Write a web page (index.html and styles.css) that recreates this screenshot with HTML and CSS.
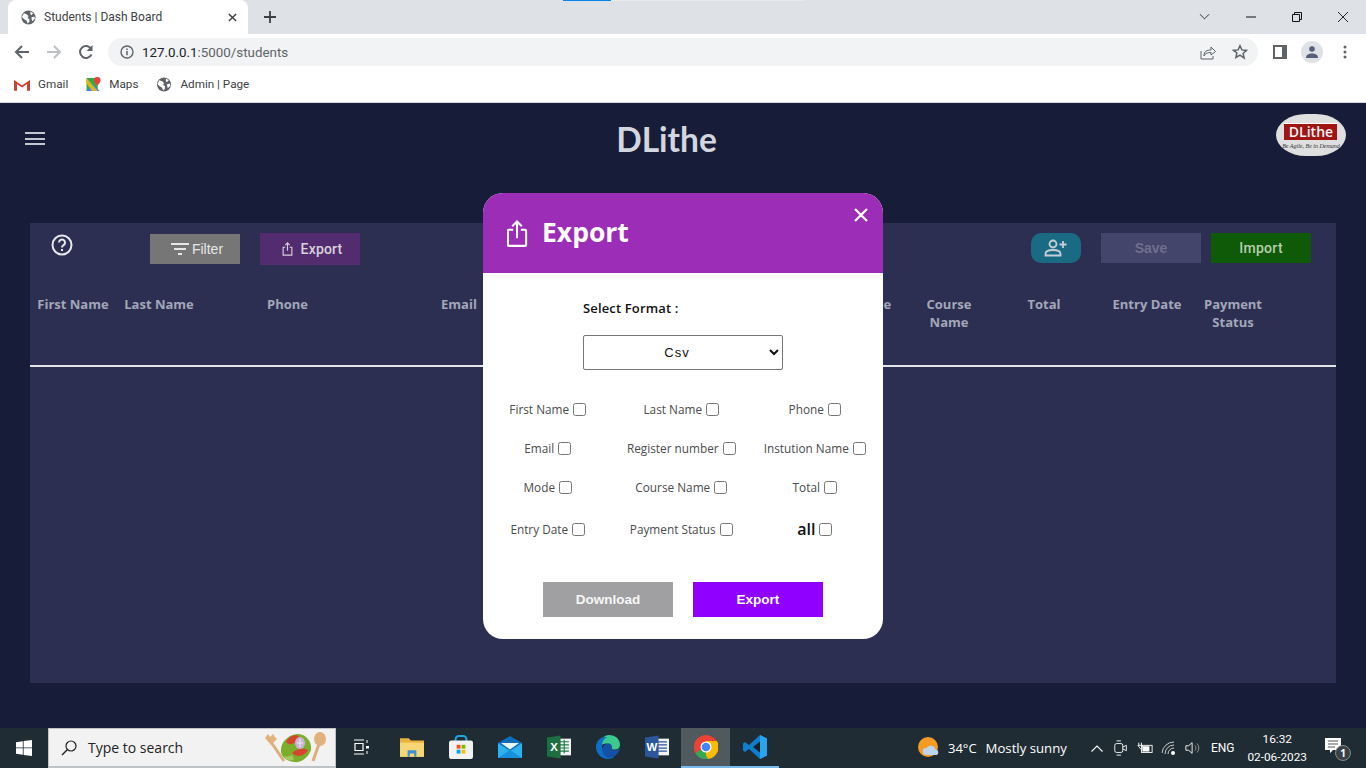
FILE: index.html
```html
<!DOCTYPE html>
<html lang="en">
<head>
<meta charset="UTF-8" />
<title>Students | Dash Board</title>
<link rel="stylesheet" href="styles.css">
</head>
<body>
<div class="browser">
  <div class="tabstrip">
    <div class="tab">
      <svg class="globe" viewBox="0 0 16 16"><circle cx="8" cy="8" r="7.5" fill="#5f6368"/><path d="M3 3.5l3 1 2 2-1 2 2 1v3l-2 2-1-3-3-2-2-2zM10 1.5l3 2-2 2-1-1zM11 8l3-1 1 2-3 3z" fill="#fff"/></svg>
      <span class="tab-title">Students | Dash Board</span>
      <svg class="tab-x" viewBox="0 0 10 10"><path d="M1 1l8 8M9 1l-8 8" stroke="#3c4043" stroke-width="1.6"/></svg>
    </div>
    <svg class="new-tab" viewBox="0 0 12 12"><path d="M6 0v12M0 6h12" stroke="#3c4043" stroke-width="1.8"/></svg>
    <div class="win-btns">
      <svg viewBox="0 0 12 8" class="wb-chev"><path d="M1 1l5 5 5-5" fill="none" stroke="#222" stroke-width="1"/></svg>
      <svg viewBox="0 0 10 10" class="wb-min"><path d="M0 5h10" stroke="#111" stroke-width="1"/></svg>
      <svg viewBox="0 0 10 10" class="wb-max"><path d="M.5 2.5h7v7h-7zM2.5 2.5v-2h7v7h-2" fill="none" stroke="#111" stroke-width="1"/></svg>
      <svg viewBox="0 0 10 10" class="wb-close"><path d="M0 0l10 10M10 0L0 10" stroke="#111" stroke-width=".9"/></svg>
    </div>
    <span class="load-line"></span>
  </div>
  <div class="toolbar">
    <svg class="nav-ic" viewBox="0 0 16 16"><path d="M15 8H2M8 2L2 8l6 6" fill="none" stroke="#5f6368" stroke-width="2"/></svg>
    <svg class="nav-ic" viewBox="0 0 16 16"><path d="M1 8h13M8 2l6 6-6 6" fill="none" stroke="#bdc1c6" stroke-width="2"/></svg>
    <svg class="nav-ic" viewBox="0 0 16 16"><path d="M13.5 10.5A6 6 0 1 1 13 4.5" fill="none" stroke="#5f6368" stroke-width="2"/><path d="M14.5 1v6h-6z" fill="#5f6368"/></svg>
    <div class="omnibox">
      <svg class="info" viewBox="0 0 14 14"><circle cx="7" cy="7" r="6" fill="none" stroke="#5f6368" stroke-width="1.4"/><path d="M7 6v4.2M7 3.6v1.4" stroke="#5f6368" stroke-width="1.5"/></svg>
      <span class="url"><b>127.0.0.1</b>:5000/students</span>
      <svg class="share" viewBox="0 0 16 16"><path d="M1 7v8h12v-3" fill="none" stroke="#5f6368" stroke-width="1"/><path d="M4 12c0-5 3-6 7-6V3l4.500 4.500L11 11V8.500c-3 0-5.500.5-7 3.500z" fill="none" stroke="#5f6368" stroke-width="1"/></svg>
      <svg class="star" viewBox="0 0 16 16"><path d="M8 1.700l1.900 4.200 4.600.5-3.400 3.100 1 4.500L8 11.200 3.900 13.500l1-4.500L1.500 6.400l4.600-.5z" fill="none" stroke="#5f6368" stroke-width="1.500"/></svg>
    </div>
    <svg class="panel-ic" viewBox="0 0 14 14"><path d="M0 0h14v14H0z" fill="#5f6368"/><path d="M2 2h7v10H2z" fill="#fff"/></svg>
    <div class="avatar"><svg viewBox="0 0 14 14"><circle cx="7" cy="4" r="2.800" fill="#555f7a"/><path d="M1 13c0-3.500 3-4.500 6-4.500s6 1 6 4.500z" fill="#555f7a"/></svg></div>
    <svg class="menu-dots" viewBox="0 0 4 14"><circle cx="2" cy="2" r="1.500" fill="#5f6368"/><circle cx="2" cy="7" r="1.500" fill="#5f6368"/><circle cx="2" cy="12" r="1.500" fill="#5f6368"/></svg>
  </div>
  <div class="bookmarks">
    <div class="bm">
      <svg class="bm-ic" viewBox="0 0 16 12"><path d="M0 12V1.500L8 7l8-5.500V12h-3V5.500L8 9 3 5.500V12z" fill="#d93025"/><path d="M3 12V5.500L0 3v9zM13 12V5.500L16 3v9z" fill="#c5453c"/></svg>
      <span>Gmail</span>
    </div>
    <div class="bm">
      <svg class="bm-ic maps" viewBox="0 0 16 16"><path d="M0 1h12v14H0z" fill="#34a853"/><path d="M0 15l7-7 7 7z" fill="#4285f4"/><path d="M0 1l12 14H6L0 7z" fill="#fbbc04" opacity=".85"/><path d="M11.500 0a3.500 3.500 0 0 1 3.500 3.500c0 2.500-3.500 5.500-3.500 5.500S8 6 8 3.500A3.500 3.500 0 0 1 11.500 0z" fill="#ea4335"/></svg>
      <span>Maps</span>
    </div>
    <div class="bm">
      <svg class="bm-ic" viewBox="0 0 16 16"><circle cx="8" cy="8" r="7.500" fill="#5f6368"/><path d="M3 3.500l3 1 2 2-1 2 2 1v3l-2 2-1-3-3-2-2-2zM10 1.500l3 2-2 2-1-1zM11 8l3-1 1 2-3 3z" fill="#fff"/></svg>
      <span>Admin | Page</span>
    </div>
  </div>
</div>

<div class="app">
  <header class="topbar">
    <div class="burger"><i></i><i></i><i></i></div>
    <h1 class="brand">DLithe</h1>
    <div class="logo">
      <span class="logo-box">DLithe</span>
      <span class="logo-tag">Be Agile, Be in Demand</span>
    </div>
  </header>

  <section class="panel">
    <div class="actions">
      <svg class="help" viewBox="0 0 22 22"><circle cx="11" cy="11" r="9.500" fill="none" stroke="#e8e8ee" stroke-width="2"/><path d="M8 8.500a3 3 0 1 1 4.500 2.600c-1 .6-1.500 1-1.500 2.400" fill="none" stroke="#e8e8ee" stroke-width="2"/><path d="M11 15v2" stroke="#e8e8ee" stroke-width="2"/></svg>
      <button class="btn btn-filter">
        <svg viewBox="0 0 18 12"><path d="M0 1h18M3 6h12M7 11h4" stroke="#e6e6e6" stroke-width="1.800"/></svg>
        Filter
      </button>
      <button class="btn btn-export">
        <svg viewBox="0 0 12 16"><path d="M3.500 6H1v9h10V6H8.500M6 10V1M3.500 3.500L6 1l2.500 2.500" fill="none" stroke="#d6cfdc" stroke-width="1.300"/></svg>
        Export
      </button>
      <span class="spacer"></span>
      <button class="btn btn-add">
        <svg viewBox="0 0 24 18"><circle cx="9" cy="5" r="3.500" fill="none" stroke="#c5d0d6" stroke-width="1.800"/><path d="M1.500 16.500v-1.500c0-2.500 3-4 7.500-4s7.500 1.500 7.500 4v1.500z" fill="none" stroke="#c5d0d6" stroke-width="1.800"/><path d="M19 2v7M15.500 5.500h7" stroke="#c5d0d6" stroke-width="1.800"/></svg>
      </button>
      <button class="btn btn-save">Save</button>
      <button class="btn btn-import">Import</button>
    </div>
    <div class="thead">
      <span>First Name</span>
      <span>Last Name</span>
      <span>Phone</span>
      <span>Email</span>
      <span></span>
      <span></span>
      <span>Mode</span>
      <span>Course Name</span>
      <span>Total</span>
      <span>Entry Date</span>
      <span>Payment Status</span>
    </div>
  </section>

  <div class="modal">
    <div class="modal-head">
      <svg class="head-ic" viewBox="0 0 22 28"><path d="M6.500 10H2a1 1 0 0 0-1 1v15a1 1 0 0 0 1 1h17a1 1 0 0 0 1-1V11a1 1 0 0 0-1-1h-4.500M10.500 19V2M5.500 6.500l5-5 5 5" fill="none" stroke="#fff" stroke-width="2.200"/></svg>
      <h2>Export</h2>
      <svg class="modal-x" viewBox="0 0 14 14"><path d="M1 1l12 12M13 1L1 13" stroke="#fff" stroke-width="2.300"/></svg>
    </div>
    <div class="modal-body">
      <label class="fmt-label">Select Format :</label>
      <select class="fmt-select"><option>Csv</option></select>
      <div class="checks">
        <label class="chk">First Name <input type="checkbox"></label>
        <label class="chk">Last Name <input type="checkbox"></label>
        <label class="chk">Phone <input type="checkbox"></label>
        <label class="chk">Email <input type="checkbox"></label>
        <label class="chk">Register number <input type="checkbox"></label>
        <label class="chk">Instution Name <input type="checkbox"></label>
        <label class="chk">Mode <input type="checkbox"></label>
        <label class="chk">Course Name <input type="checkbox"></label>
        <label class="chk">Total <input type="checkbox"></label>
        <label class="chk">Entry Date <input type="checkbox"></label>
        <label class="chk">Payment Status <input type="checkbox"></label>
        <label class="chk chk-all">all <input type="checkbox"></label>
      </div>
      <div class="modal-btns">
        <button class="mbtn mbtn-dl">Download</button>
        <button class="mbtn mbtn-ex">Export</button>
      </div>
    </div>
  </div>
</div>

<footer class="taskbar">
  <svg class="start" viewBox="0 0 16 16"><path d="M0 2.200L6.800 1.200V7.500H0zM7.600 1.100L16 0V7.500H7.600zM0 8.300H6.800V14.800L0 13.800zM7.600 8.300H16V16L7.600 14.900z" fill="#fff"/></svg>
  <div class="search">
    <svg class="lens" viewBox="0 0 16 16"><circle cx="10" cy="6" r="5" fill="none" stroke="#222" stroke-width="1.200"/><path d="M6.500 9.500L1 15" stroke="#222" stroke-width="1.500"/></svg>
    <span>Type to search</span>
    <svg class="salad" viewBox="0 0 64 32"><path d="M7 10l13 19" stroke="#dcae7c" stroke-width="3"/><path d="M1 6l3-4 2 3 3-3 2 3 2 2-6 6z" fill="#e2b27e"/><path d="M55 12l-6 17" stroke="#dcae7c" stroke-width="3"/><ellipse cx="56" cy="7" rx="6" ry="7" fill="#e2b27e"/><path d="M17 17c1-9 9-15 18-15 8 1 13 8 12 16-3 8-10 13-17 12-8-1-14-6-13-13z" fill="#7cae2e"/><path d="M22 10c3-6 9-8 13-6-3 7-8 11-13 6zM28 21c5-5 13-5 16-3-3 6-11 8-16 3z" fill="#d8452e"/><ellipse cx="36" cy="11" rx="5" ry="6" fill="#c9b4d6"/><path d="M36 7v8M33 11h6" stroke="#f1eaf4"/><path d="M19 24c3 1 6 1 9-1l2 5c-4 1-8 0-11-4z" fill="#a9c85b"/></svg>
  </div>
  <div class="tb-apps">
    <div class="tb-app">
      <svg class="i-task" viewBox="0 0 16 16"><path d="M1 1h10M1 15h10M2 4.500h8v7H2z" fill="none" stroke="#fff" stroke-width="1.200"/><path d="M13 7h3v2.500h-3z" fill="#fff"/><path d="M14 1v3M14 12v3" stroke="#fff"/></svg>
    </div>
    <div class="tb-app">
      <svg viewBox="0 0 22 18"><path d="M0 1h8l2 2h12v15H0z" fill="#e8b33f"/><path d="M0 5h22v13H0z" fill="#f7d774"/><path d="M7 12h8v6h-2v-3H9v3H7z" fill="#3a8fd6"/></svg>
    </div>
    <div class="tb-app">
      <svg viewBox="0 0 22 22"><path d="M6 7V4a3 3 0 0 1 3-3h4a3 3 0 0 1 3 3v3" fill="none" stroke="#23a6e0" stroke-width="1.800"/><rect x="0" y="5" width="22" height="17" rx="2" fill="#f2f2f2"/><path d="M7 9h3.500v3.500H7z" fill="#f25022"/><path d="M11.500 9H15v3.500h-3.500z" fill="#7fba00"/><path d="M7 13.500h3.500V17H7z" fill="#00a4ef"/><path d="M11.500 13.500H15V17h-3.500z" fill="#ffb900"/></svg>
    </div>
    <div class="tb-app">
      <svg viewBox="0 0 24 22"><path d="M0 7L12 0l12 7v15H0z" fill="#0f6cbd"/><path d="M0 7l12 8 12-8v15H0z" fill="#2db2f0"/><path d="M3 7h18l-9 6.500z" fill="#e8f4fc"/><path d="M0 22l12-8 12 8z" fill="#1a8fdb"/></svg>
    </div>
    <div class="tb-app">
      <svg viewBox="0 0 23 22"><path d="M9 3h14v16H9z" fill="#f2f2f2"/><path d="M12 6h9M12 9h9M12 12h9M12 15h9M16.500 4v13" stroke="#1f7a4a" stroke-width="1.100"/><path d="M0 2l13-2v22L0 20z" fill="#1d6f42"/><text x="3" y="15" class="ic-letter">X</text></svg>
    </div>
    <div class="tb-app">
      <svg viewBox="0 0 22 22"><path d="M3 12C2 5 7 0 12 0c6 0 10 4 10 9 0 4-4 5-7 4-1-.5-1-1.500-.5-2.500C12 7 7 7 5 10c-1 2-1.500 3-2 2z" fill="#3bc98d"/><path d="M0 11C0 5 5 1 10 2 6 4 5 8 6 13c1 5 6 8 11 7-2 1.500-4 2-6 2C5 22 0 17 0 11z" fill="#0f6fc6"/><path d="M6 13c0-4 4-6 7-5 2 1 1 3 1.500 4.500 1 2 5 2 7.500-.5-1 5-5 9-10 9-4-1-6-4-6-8z" fill="#1450a3"/></svg>
    </div>
    <div class="tb-app">
      <svg viewBox="0 0 23 22"><path d="M9 3h14v16H9z" fill="#f2f2f2"/><path d="M12 6h9M12 9h9M12 12h9M12 15h9" stroke="#2b579a" stroke-width="1.200"/><path d="M0 2l13-2v22L0 20z" fill="#2b579a"/><text x="1.500" y="15" class="ic-letter">W</text></svg>
    </div>
    <div class="tb-app tb-active">
      <svg viewBox="0 0 24 24"><circle cx="12" cy="12" r="12" fill="#ea4335"/><path d="M12 12L1.600 18A12 12 0 0 0 12 24c1.500 0 2.500-.2 2.500-.2z" fill="#34a853"/><path d="M12 6h10.900A12 12 0 0 1 12 24z" fill="#fbbc04"/><path d="M1.600 18A12 12 0 0 1 2 5.500L8 15z" fill="#ea4335"/><path d="M1.600 18L8 14l6 9.800A12 12 0 0 1 1.600 18z" fill="#34a853"/><circle cx="12" cy="12" r="5.500" fill="#fff"/><circle cx="12" cy="12" r="4.300" fill="#4285f4"/></svg>
    </div>
    <div class="tb-app tb-open">
      <svg viewBox="0 0 24 24"><path d="M17 0l7 3.500v17L17 24 6 14l-4 3-2-1.500v-7L2 7l4 3z" fill="#0f7fcc"/><path d="M17 6.500L10 12l7 5.500z" fill="#16222a"/><path d="M17 0l7 3.500v17L17 24z" fill="#29a3ee"/></svg>
    </div>
  </div>
  <div class="tray">
    <svg class="sun" viewBox="0 0 22 22"><circle cx="10" cy="10" r="10" fill="#f59a23"/><path d="M8 18a3.500 3.500 0 0 1 .5-7 5 5 0 0 1 9 1.500A3 3 0 0 1 19 18z" fill="#bcd4ee"/></svg>
    <span class="temp">34°C</span>
    <span class="sky">Mostly sunny</span>
    <svg class="t-chev" viewBox="0 0 12 7"><path d="M.5 6.500L6 1l5.500 5.500" fill="none" stroke="#fff" stroke-width="1.100"/></svg>
    <svg class="t-ic" viewBox="0 0 16 18"><rect x="1" y="4" width="9" height="10" rx="2" fill="none" stroke="#fff"/><path d="M10 8l4-2v6l-4-2M3 1h5M3 17h5" fill="none" stroke="#fff"/></svg>
    <svg class="t-ic" viewBox="0 0 18 14"><rect x="5" y="4" width="12" height="8" fill="none" stroke="#fff"/><path d="M6 5h8v6H6z" fill="#fff"/><path d="M2 1v3M5 1v3M1 4h5v2l-2 2z" fill="none" stroke="#fff"/></svg>
    <svg class="t-ic" viewBox="0 0 16 16"><path d="M1 13a12 12 0 0 1 12-11M4 14a9 9 0 0 1 9-9M7 14a6 6 0 0 1 6-6" fill="none" stroke="#c9ced1" stroke-width="1"/><circle cx="12" cy="13" r="2" fill="#fff"/></svg>
    <svg class="t-ic" viewBox="0 0 18 16"><path d="M1 5.500h3l4-3.500v12l-4-3.500H1z" fill="none" stroke="#fff"/><path d="M11 5a4 4 0 0 1 0 6M13.500 3a7 7 0 0 1 0 10" fill="none" stroke="#9aa0a3"/></svg>
    <span class="lang">ENG</span>
    <div class="clock"><span>16:32</span><span>02-06-2023</span></div>
    <div class="notif">
      <svg viewBox="0 0 16 16"><path d="M0 0h16v12H8l-3 3v-3H0z" fill="#fff"/><path d="M3 3h10M3 6h10M3 9h7" stroke="#555" stroke-width="1"/></svg>
      <span class="notif-badge">1</span>
    </div>
  </div>
</footer>
</body>
</html>
```

FILE: styles.css
```css
* {
  box-sizing: border-box;
}
html, body {
  margin: 0;
  height: 768px;
  overflow: hidden;
}
body {
  display: flex;
  flex-direction: column;
  font-family: "Open Sans", "Noto Sans", sans-serif;
}
svg {
  display: block;
  flex: none;
}

/* browser chrome */
.browser {
  height: 103px;
  flex: none;
  background: #fff;
  border-bottom: 1px solid #d8d9db;
  font-family: Roboto, sans-serif;
}
.tabstrip {
  position: relative;
  height: 34px;
  background: #dee1e6;
  display: flex;
  align-items: center;
}
.tab {
  width: 240px;
  height: 34px;
  margin-left: 8px;
  padding: 0 11px 0 13px;
  background: #fff;
  border-radius: 8px 8px 0 0;
  display: flex;
  align-items: center;
  font-size: 12px;
  color: #3c4043;
}
.globe {
  width: 15px;
  height: 15px;
  margin-right: 8px;
}
.tab-title {
  flex: 1;
}
.tab-x {
  width: 9px;
  height: 9px;
}
.new-tab {
  width: 12px;
  height: 12px;
  margin-left: 16px;
}
.win-btns {
  margin-left: auto;
  display: flex;
  align-items: center;
}
.wb-chev {
  width: 11px;
  height: 8px;
  margin-right: 36px;
}
.wb-min {
  width: 10px;
  height: 10px;
  margin-right: 36px;
}
.wb-max {
  width: 10px;
  height: 10px;
  margin-right: 36px;
}
.wb-close {
  width: 10px;
  height: 10px;
  margin-right: 18px;
}
.load-line {
  position: absolute;
  left: 563px;
  top: 0;
  width: 241px;
  height: 1px;
  background: linear-gradient(to right, #0a84e8 48px, #e8eaec 48px);
}
.toolbar {
  height: 36px;
  display: flex;
  align-items: center;
  padding-left: 14px;
}
.nav-ic {
  width: 16px;
  height: 16px;
  margin-right: 16px;
}
.nav-ic:nth-child(3) {
  margin-right: 14px;
}
.omnibox {
  width: 1150px;
  height: 28px;
  border-radius: 14px;
  background: #f1f3f4;
  display: flex;
  align-items: center;
  padding: 0 10px 0 12px;
}
.info {
  width: 14px;
  height: 14px;
  margin-right: 8px;
}
.url {
  flex: 1;
  font-size: 13.35px;
  color: #5f6368;
}
.url b {
  font-weight: 400;
  color: #202124;
}
.share {
  width: 16px;
  height: 16px;
  margin-right: 16px;
}
.star {
  width: 16px;
  height: 16px;
}
.panel-ic {
  width: 14px;
  height: 14px;
  margin-left: 15px;
}
.avatar {
  width: 22px;
  height: 22px;
  margin-left: 14px;
  border-radius: 50%;
  background: #dee1e6;
  padding: 4px;
}
.menu-dots {
  width: 4px;
  height: 14px;
  margin-left: 20px;
}
.bookmarks {
  height: 28px;
  display: flex;
  align-items: center;
  padding-left: 14px;
  font-size: 11.7px;
  color: #3c4043;
}
.bm {
  display: flex;
  align-items: center;
  margin-right: 18px;
}
.bm-ic {
  width: 16px;
  height: 15px;
  margin-right: 8px;
}
.bm-ic.maps {
  margin-right: 7px;
}

/* app */
.app {
  position: relative;
  flex: 1;
  background: #171c38;
}
.topbar {
  height: 120px;
  display: flex;
  align-items: flex-start;
  justify-content: space-between;
  padding: 11px 20px 0 25px;
}
.burger {
  width: 20px;
  margin-top: 18px;
}
.burger i {
  display: block;
  height: 2px;
  margin-bottom: 3.5px;
  background: #c4c6d0;
}
.brand {
  margin: 3px 0 0 12px;
  font-family: "Lato", sans-serif;
  font-size: 33.5px;
  font-weight: 700;
  color: #d3d6de;
  line-height: 44px;
}
.logo {
  width: 70px;
  height: 42px;
  border-radius: 30px / 21px;
  background: #dfdfdf;
  display: flex;
  flex-direction: column;
  align-items: center;
  padding-top: 9px;
}
.logo-box {
  width: 53px;
  height: 17px;
  background: #a01414;
  color: #f4f4f4;
  font: 600 14px/16px "Open Sans", sans-serif;
  text-align: center;
  border-top: 1px solid #fff;
}
.logo-tag {
  font: italic 6px/8px "Liberation Serif", serif;
  color: #333;
  margin-top: 2px;
  white-space: nowrap;
}
.panel {
  width: 1306px;
  height: 460px;
  margin-left: 30px;
  background: #2c2f52;
}
.actions {
  height: 60px;
  display: flex;
  align-items: flex-start;
  padding-top: 10px;
}
.help {
  width: 22px;
  height: 22px;
  margin: 1px 0 0 21px;
}
.btn {
  border: none;
  padding: 0;
  height: 30px;
  font-family: "Liberation Sans", sans-serif;
  font-size: 14px;
  display: flex;
  align-items: center;
  justify-content: center;
}
.btn-filter {
  width: 90px;
  margin: 1px 0 0 77px;
  background: #767676;
  color: #e6e6e6;
  gap: 3px;
  padding-left: 4px;
}
.btn-filter svg {
  width: 18px;
  height: 12px;
}
.btn-export {
  width: 100px;
  height: 32px;
  margin-left: 20px;
  padding-left: 4px;
  background: #532c6f;
  color: #d8d2dc;
  gap: 8px;
  font-weight: 500;
  font-family: Roboto, sans-serif;
  letter-spacing: .2px;
}
.btn-export svg {
  width: 11px;
  height: 14px;
}
.spacer {
  flex: 1;
}
.btn-add {
  width: 50px;
  border-radius: 10px;
  background: #1a6a84;
}
.btn-add svg {
  width: 24px;
  height: 18px;
}
.btn-save {
  width: 100px;
  margin-left: 20px;
  background: #43456a;
  color: #6e7090;
  font-weight: 700;
}
.btn-import {
  width: 100px;
  margin: 0 25px 0 10px;
  background: #0f5a08;
  color: #b3cfae;
  font-weight: 500;
  font-family: Roboto, sans-serif;
  letter-spacing: .3px;
}
.thead {
  height: 84px;
  display: grid;
  grid-template-columns: 86px 86px 171px 172px 140px 152px 72px 80px 110px 96px 76px;
  padding-top: 12px;
  border-bottom: 2px solid #e4e4e6;
  font-size: 13px;
  font-weight: 700;
  line-height: 18px;
  color: #a3a7b8;
  text-align: center;
}

/* modal */
.modal {
  position: absolute;
  left: 483px;
  top: 90px;
  width: 400px;
  height: 446px;
  border-radius: 20px;
  overflow: hidden;
  background: #fff;
}
.modal-head {
  position: relative;
  height: 80px;
  background: #9c2db7;
  color: #fff;
  display: flex;
  align-items: center;
  padding-left: 24px;
}
.head-ic {
  width: 21px;
  height: 27px;
  margin-right: 14px;
}
.modal-head h2 {
  margin: 0 0 3px;
  font-size: 26.5px;
  font-weight: 700;
}
.modal-x {
  position: absolute;
  right: 15px;
  top: 15px;
  width: 14px;
  height: 14px;
}
.modal-body {
  padding-top: 26px;
  color: #4b4b4b;
}
.fmt-label {
  display: block;
  margin-left: 100px;
  font-size: 13px;
  font-weight: 600;
  letter-spacing: .15px;
  line-height: 18px;
  color: #111;
}
.fmt-select {
  display: block;
  width: 200px;
  height: 35px;
  margin: 18px 0 0 100px;
  font-family: "Liberation Sans", sans-serif;
  font-size: 13px;
  letter-spacing: 1px;
  text-align: center;
  background: #fff;
  color: #111;
  border: 1px solid #767676;
  border-radius: 2px;
}
.checks {
  display: grid;
  grid-template-columns: repeat(3, 133.5px);
  grid-template-rows: 39px 39px 39px 45px;
  margin: 20px 0 0 -2px;
}
.chk {
  display: flex;
  align-items: center;
  justify-content: center;
  gap: 4px;
  padding-bottom: 2px;
  font-size: 11.8px;
  white-space: nowrap;
}
.chk input {
  width: 13px;
  height: 13px;
  margin: 2px 0 0;
}
.chk-all {
  font-size: 16px;
  font-weight: 600;
  color: #111;
}
.modal-btns {
  display: flex;
  justify-content: center;
  gap: 20px;
  margin-top: 30px;
}
.mbtn {
  width: 130px;
  height: 35px;
  border: none;
  font: 700 13.5px "Liberation Sans", sans-serif;
  color: #fff;
}
.mbtn-dl {
  background: #a0a0a2;
  color: #f7f7f7;
}
.mbtn-ex {
  background: #8f00ff;
}

/* taskbar */
.taskbar {
  height: 40px;
  flex: none;
  display: flex;
  align-items: center;
  background: #1f2c33;
  color: #fff;
  font-size: 13px;
}
.start {
  width: 16px;
  height: 16px;
  margin: 0 16px;
}
.search {
  width: 288px;
  height: 40px;
  display: flex;
  align-items: center;
  background: #f2f2f2;
  border: 1px solid #bfc2c4;
  border-bottom-width: 2px;
  padding: 0 7px 0 12px;
  color: #222;
  font-size: 14px;
}
.lens {
  width: 16px;
  height: 16px;
  margin-right: 11px;
}
.search span {
  flex: 1;
}
.salad {
  width: 64px;
  height: 32px;
}
.tb-apps {
  display: flex;
  margin-left: 2px;
}
.tb-app {
  width: 49px;
  height: 40px;
  display: flex;
  align-items: center;
  justify-content: center;
  border-bottom: 2px solid transparent;
}
.tb-app svg {
  width: 24px;
  height: 24px;
}
.tb-app svg.i-task {
  width: 16px;
  height: 16px;
  margin-right: 3px;
}
.tb-active {
  background: #50595d;
  border-bottom-color: #76b9ed;
}
.tb-open {
  border-bottom-color: #76b9ed;
}
.ic-letter {
  font: 700 11px "Liberation Sans", sans-serif;
  fill: #fff;
}
.tray {
  margin-left: auto;
  display: flex;
  align-items: center;
  height: 40px;
}
.sun {
  width: 22px;
  height: 22px;
  margin-right: 8px;
}
.temp {
  margin-right: 9px;
}
.sky {
  margin-right: 24px;
  font-size: 13.2px;
}
.t-chev {
  width: 12px;
  height: 7px;
  margin-right: 10px;
}
.t-ic {
  width: 16px;
  height: 16px;
  margin-right: 8px;
}
.lang {
  font-family: Roboto, sans-serif;
  font-size: 12px;
  margin: 0 13px 0 2px;
}
.clock {
  display: flex;
  flex-direction: column;
  align-items: center;
  font-family: Roboto, sans-serif;
  font-size: 11.8px;
  line-height: 18px;
}
.notif {
  position: relative;
  width: 26px;
  height: 26px;
  margin: 0 15px 0 18px;
}
.notif svg {
  width: 16px;
  height: 16px;
  margin-top: 3px;
}
.notif-badge {
  position: absolute;
  right: 0;
  bottom: 0;
  width: 16px;
  height: 16px;
  border-radius: 50%;
  background: #3a4248;
  border: 1px solid #888;
  font-size: 10px;
  font-weight: 700;
  line-height: 14px;
  text-align: center;
}
```
